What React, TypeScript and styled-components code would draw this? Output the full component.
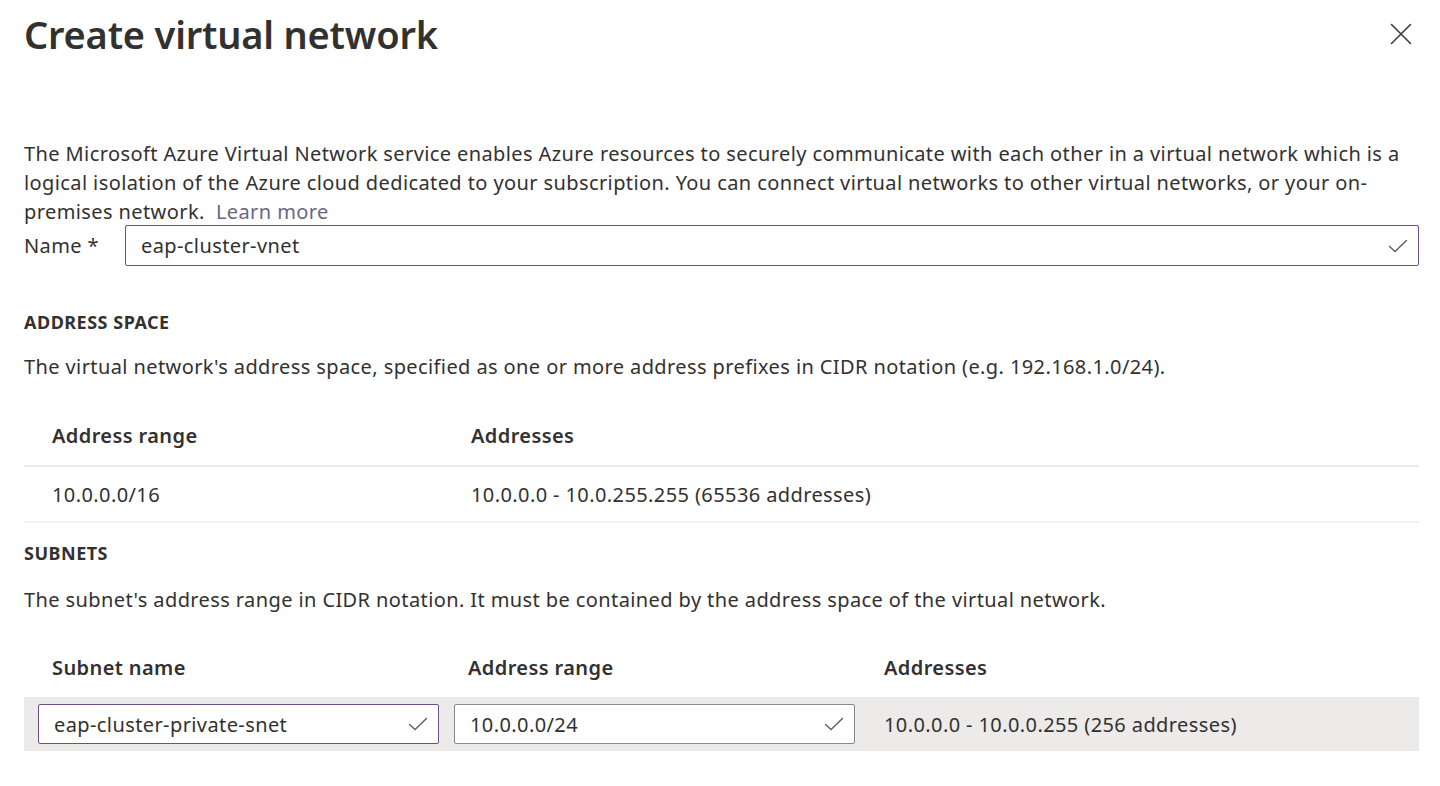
import React from "react";
import styled, { createGlobalStyle } from "styled-components";

const Global = createGlobalStyle`
  html, body { margin: 0; padding: 0; background: #ffffff; }
  body { font-family: "Noto Sans", "Open Sans", sans-serif; color: #323130; }
  * { box-sizing: border-box; }
`;

const Page = styled.div`
  width: 1440px;
  height: 786px;
  padding: 0 21px 0 24px;
  overflow: hidden;
  font-size: 20px;
  letter-spacing: 0.4px;
`;

const Header = styled.header`
  display: flex;
  justify-content: space-between;
  align-items: center;
  height: 68px;
`;

const Title = styled.h1`
  margin: 0;
  font-size: 38px;
  font-weight: 600;
  line-height: 46px;
  color: #323130;
  letter-spacing: -0.2px;
`;

const CloseButton = styled.button`
  border: 0;
  background: transparent;
  padding: 0;
  width: 28px;
  height: 28px;
  margin-right: 4px;
  display: flex;
  align-items: center;
  justify-content: center;
  cursor: pointer;
`;

const Intro = styled.p`
  margin: 71px 0 0;
  line-height: 29px;
`;

const LearnMore = styled.a`
  color: #6b6680;
  text-decoration: none;
`;

const NameRow = styled.div`
  display: flex;
  align-items: center;
  margin-top: -1px;
`;

const Label = styled.label`
  width: 101px;
  flex: none;
`;

const InputBox = styled.div<{ $focused?: boolean; $height?: number }>`
  display: flex;
  align-items: center;
  justify-content: space-between;
  width: 100%;
  height: ${(p) => p.$height || 41}px;
  padding: 0 10px 0 15px;
  border: 1px solid ${(p) => (p.$focused ? "#6b4f88" : "#8a8886")};
  border-radius: 2px;
  background: #ffffff;
  color: #323130;
`;

const SectionTitle = styled.h2<{ $gap?: number }>`
  margin: ${(p) => p.$gap ?? 44}px 0 0;
  font-size: 18px;
  font-weight: 700;
  line-height: 24px;
  letter-spacing: 0.5px;
  text-transform: uppercase;
`;

const SectionText = styled.p<{ $gap?: number }>`
  margin: ${(p) => p.$gap ?? 18}px 0 0;
  line-height: 29px;
`;

const AddressTable = styled.div`
  margin-top: 25px;
`;

const AddressRowGrid = styled.div<{ $header?: boolean }>`
  display: grid;
  grid-template-columns: 419px 1fr;
  align-items: center;
  padding-left: 28px;
  height: ${(p) => (p.$header ? 61 : 56)}px;
  border-bottom: ${(p) => (p.$header ? "2px solid #edebe9" : "2px solid #f3f2f1")};
  font-weight: ${(p) => (p.$header ? 600 : 400)};
`;

const SubnetTable = styled.div`
  margin-top: 23px;
`;

const SubnetGrid = styled.div<{ $header?: boolean }>`
  display: grid;
  grid-template-columns: 401px 401px 1fr;
  column-gap: 15px;
  align-items: center;
  padding: 0 14px;
  height: ${(p) => (p.$header ? 60 : 54)}px;
  background: ${(p) => (p.$header ? "transparent" : "#edebe9")};
  font-weight: ${(p) => (p.$header ? 600 : 400)};
`;

const Cell = styled.div<{ $pad?: boolean }>`
  padding-left: ${(p) => (p.$pad ? 14 : 0)}px;
  white-space: nowrap;
`;

const Check = () => (
  <svg width="20" height="14" viewBox="0 0 20 14" fill="none">
    <path d="M1.5 7.5 L7 12.5 L18.5 1.5" stroke="#605e5c" strokeWidth="1.4" strokeLinecap="round" strokeLinejoin="round" />
  </svg>
);

const CloseIcon = () => (
  <svg width="22" height="22" viewBox="0 0 22 22" fill="none">
    <path d="M1.5 1.5 L20.5 20.5 M20.5 1.5 L1.5 20.5" stroke="#3b3a45" strokeWidth="1.6" strokeLinecap="round" />
  </svg>
);

export default function App() {
  return (
    <Page>
      <Global />
      <Header>
        <Title>Create virtual network</Title>
        <CloseButton aria-label="Close">
          <CloseIcon />
        </CloseButton>
      </Header>

      <Intro>
        The Microsoft Azure Virtual Network service enables Azure resources to securely communicate with each other in a
        virtual network which is a logical isolation of the Azure cloud dedicated to your subscription. You can connect
        virtual networks to other virtual networks, or your on-premises network.{"\u00a0 "}
        <LearnMore href="#">Learn more</LearnMore>
      </Intro>

      <NameRow>
        <Label>Name *</Label>
        <InputBox $focused>
          <span>eap-cluster-vnet</span>
          <Check />
        </InputBox>
      </NameRow>

      <SectionTitle>Address space</SectionTitle>
      <SectionText>
        The virtual network's address space, specified as one or more address prefixes in CIDR notation (e.g.
        192.168.1.0/24).
      </SectionText>

      <AddressTable>
        <AddressRowGrid $header>
          <Cell>Address range</Cell>
          <Cell>Addresses</Cell>
        </AddressRowGrid>
        <AddressRowGrid>
          <Cell>10.0.0.0/16</Cell>
          <Cell>10.0.0.0 - 10.0.255.255 (65536 addresses)</Cell>
        </AddressRowGrid>
      </AddressTable>

      <SectionTitle $gap={18}>Subnets</SectionTitle>
      <SectionText $gap={20}>
        The subnet's address range in CIDR notation. It must be contained by the address space of the virtual network.
      </SectionText>

      <SubnetTable>
        <SubnetGrid $header>
          <Cell $pad>Subnet name</Cell>
          <Cell $pad>Address range</Cell>
          <Cell $pad>Addresses</Cell>
        </SubnetGrid>
        <SubnetGrid>
          <InputBox $focused $height={40}>
            <span>eap-cluster-private-snet</span>
            <Check />
          </InputBox>
          <InputBox $height={40}>
            <span>10.0.0.0/24</span>
            <Check />
          </InputBox>
          <Cell $pad>10.0.0.0 - 10.0.0.255 (256 addresses)</Cell>
        </SubnetGrid>
      </SubnetTable>
    </Page>
  );
}
